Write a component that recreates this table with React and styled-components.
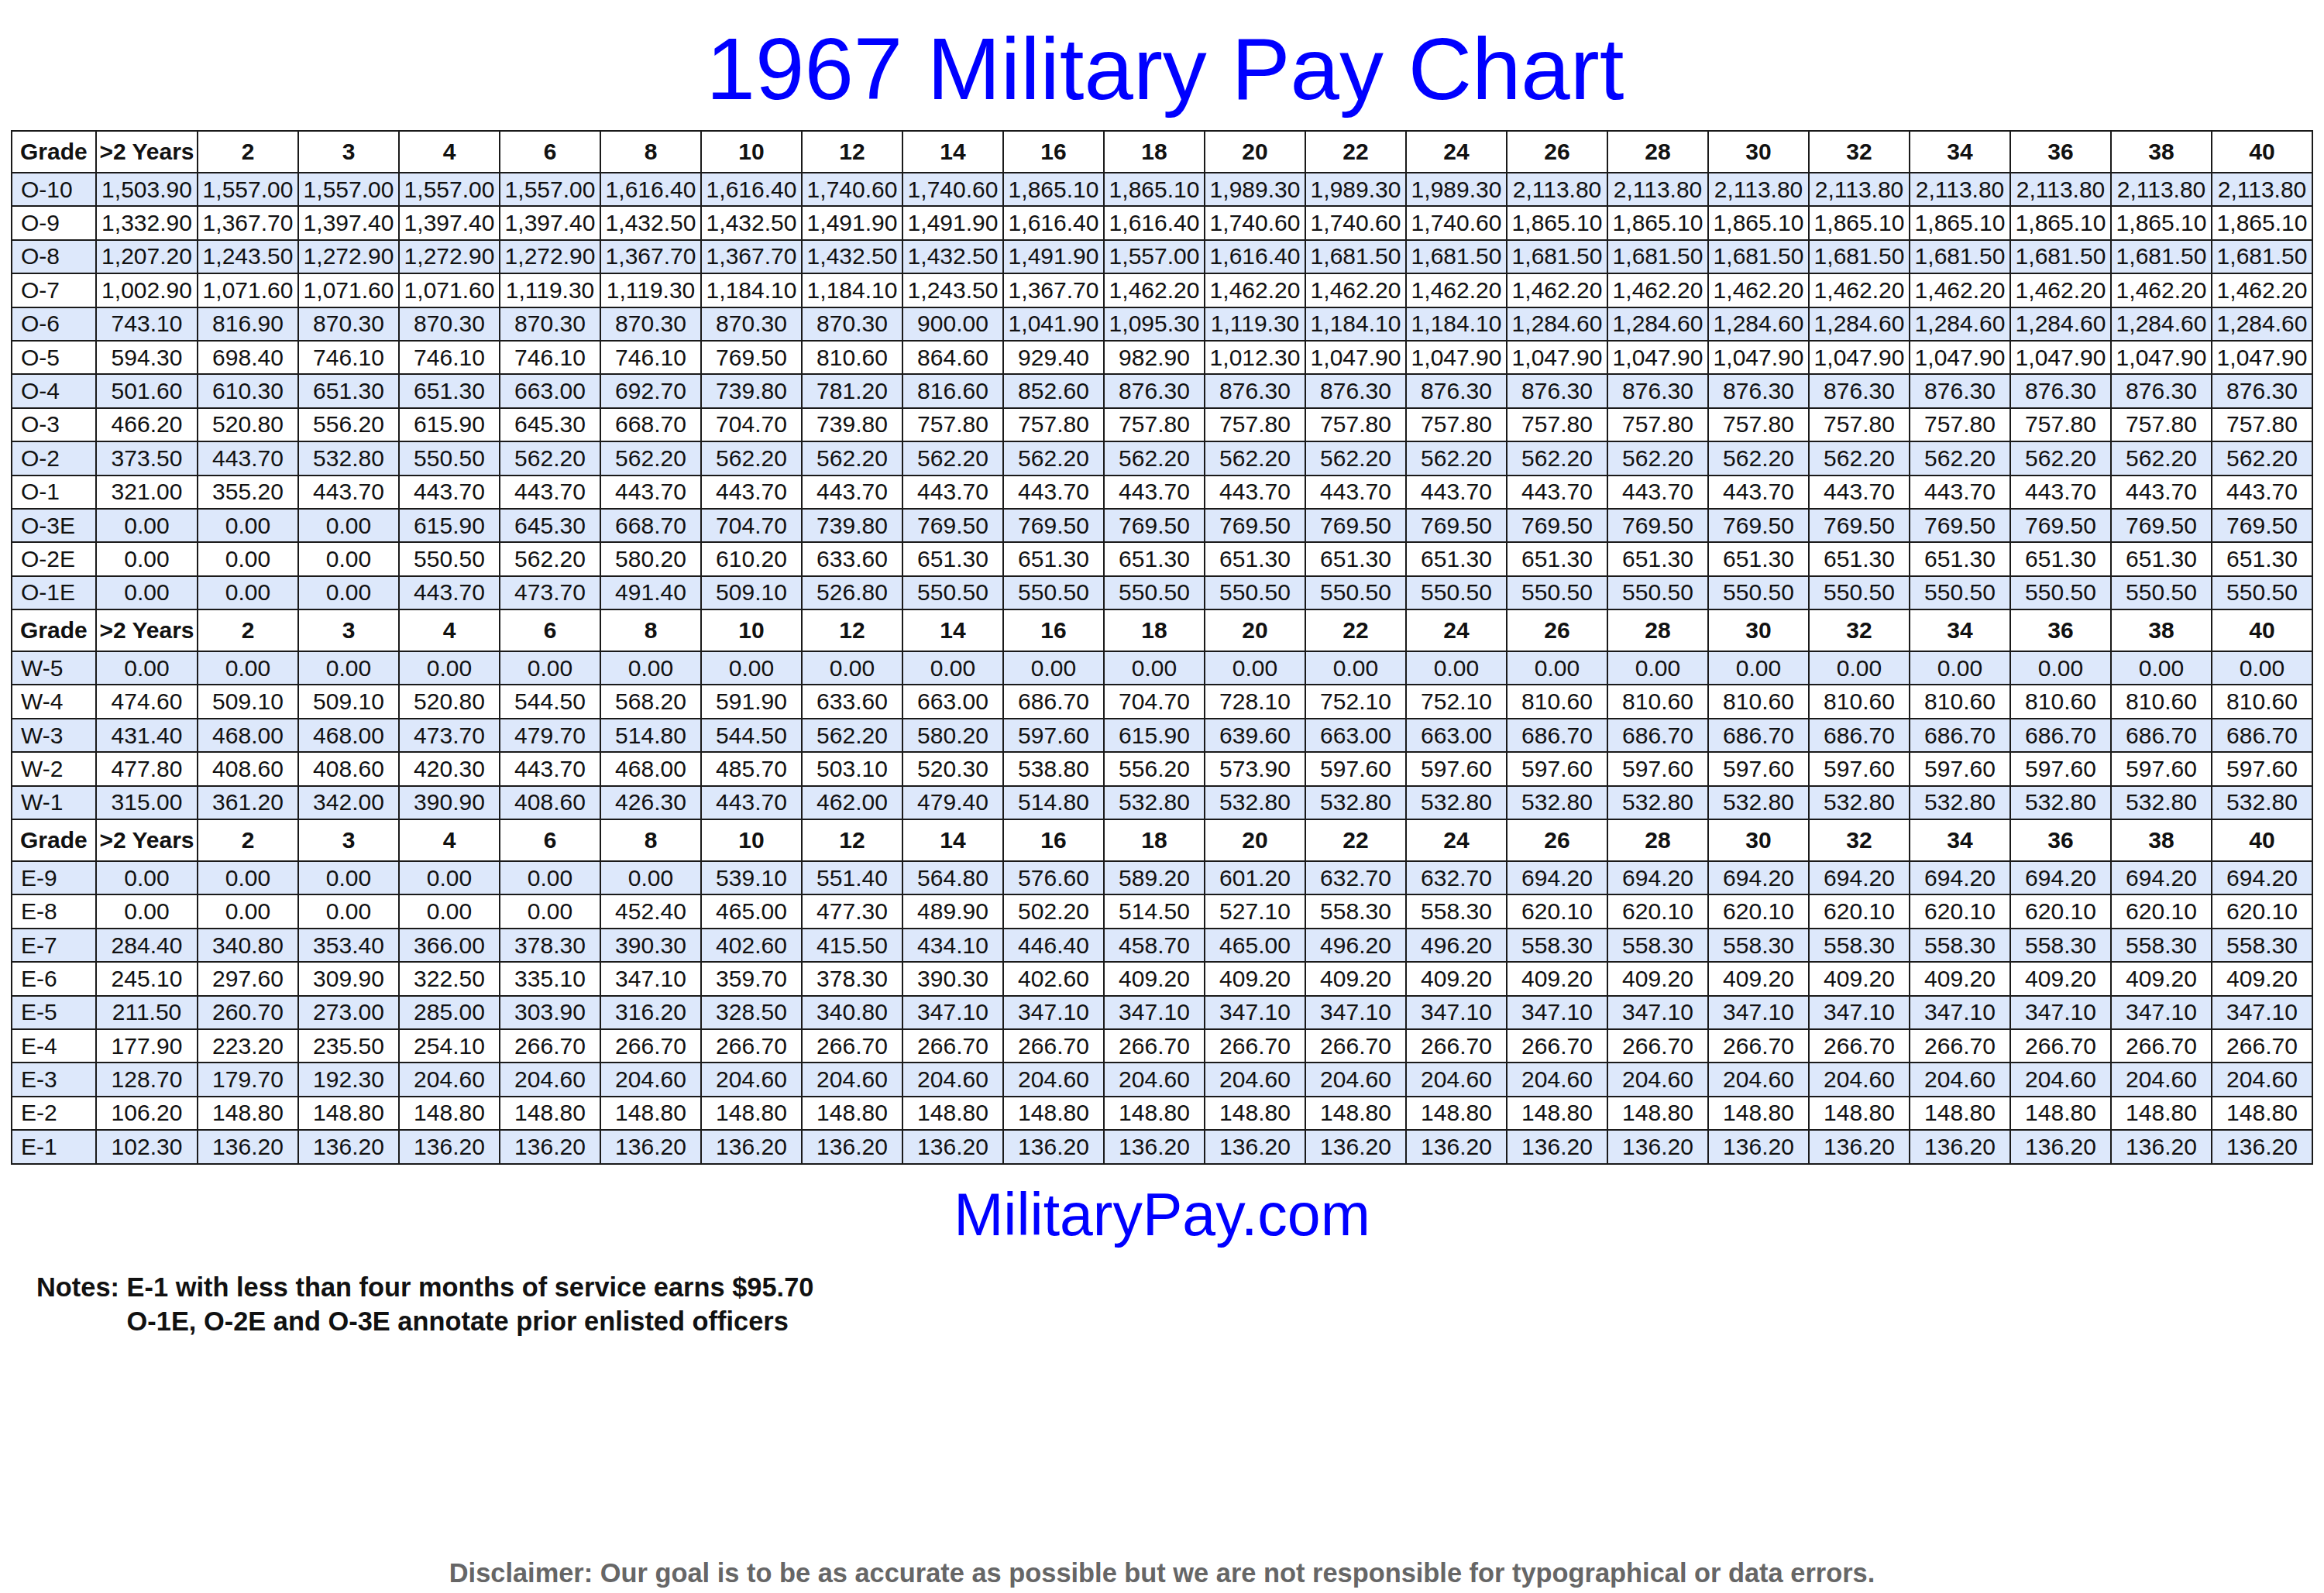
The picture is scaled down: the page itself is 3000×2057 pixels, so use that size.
import React from 'react';
import styled, { createGlobalStyle } from 'styled-components';

const GlobalStyle = createGlobalStyle`
  html, body { margin: 0; padding: 0; background: #ffffff; }
  body { font-family: "Liberation Sans", Arial, sans-serif; color: #111; }
`;

const Page = styled.div`
  width: 3000px;
  min-height: 2057px;
  box-sizing: border-box;
  padding: 23px 14px 0 14px;
  display: flex;
  flex-direction: column;
`;

const Title = styled.h1`
  margin: 0;
  font-family: "Liberation Sans", Arial, sans-serif;
  font-weight: 400;
  font-size: 114px;
  line-height: normal;
  color: #0000ff;
  text-align: center;
  padding-left: 8px;
`;

const Table = styled.table`
  margin-top: 14px;
  border-collapse: collapse;
  table-layout: fixed;
  width: 2971px;
  border: 2px solid #1a1a1a;
  font-family: "Liberation Sans", Arial, sans-serif;
  font-size: 30px;
  color: #111;
`;

const HeadRow = styled.tr`
  height: 54px;
  background: #ffffff;
`;

const DataRow = styled.tr`
  height: 43.4px;
  background: ${(p) => (p.$shade ? '#dde8fb' : '#ffffff')};
`;

const HeadCell = styled.td`
  border: 2px solid #1a1a1a;
  font-weight: 700;
  text-align: ${(p) => (p.$left ? 'left' : 'center')};
  padding: ${(p) => (p.$left ? '0 0 0 10px' : '0')};
  white-space: nowrap;
  overflow: hidden;
`;

const GradeCell = styled.td`
  border: 2px solid #1a1a1a;
  text-align: left;
  padding: 0 0 0 11px;
  white-space: nowrap;
`;

const PayCell = styled.td`
  border: 2px solid #1a1a1a;
  text-align: center;
  padding: 0;
  white-space: nowrap;
  overflow: hidden;
`;

const Site = styled.div`
  margin-top: 20px;
  font-size: 77px;
  line-height: normal;
  color: #0000ff;
  text-align: center;
`;

const Notes = styled.div`
  margin-top: 27px;
  margin-left: 33px;
  display: flex;
  font-size: 34.4px;
  font-weight: 700;
  line-height: 44px;
  color: #111;
`;

const NotesLabel = styled.span`
  white-space: pre;
`;

const NotesLines = styled.div`
  display: flex;
  flex-direction: column;
`;

const Disclaimer = styled.div`
  margin-top: 284px;
  font-size: 34.4px;
  font-weight: 700;
  line-height: normal;
  color: #666666;
  text-align: center;
`;

const COLS = ['>2 Years', '2', '3', '4', '6', '8', '10', '12', '14', '16', '18', '20', '22', '24', '26', '28', '30', '32', '34', '36', '38', '40'];

const fill = (vals) => {
  const out = [...vals];
  while (out.length < COLS.length) out.push(vals[vals.length - 1]);
  return out;
};

const z = (n) => Array(n).fill('0.00');

const sections = [
  [
    ['O-10', fill(['1,503.90', '1,557.00', '1,557.00', '1,557.00', '1,557.00', '1,616.40', '1,616.40', '1,740.60', '1,740.60', '1,865.10', '1,865.10', '1,989.30', '1,989.30', '1,989.30', '2,113.80'])],
    ['O-9', fill(['1,332.90', '1,367.70', '1,397.40', '1,397.40', '1,397.40', '1,432.50', '1,432.50', '1,491.90', '1,491.90', '1,616.40', '1,616.40', '1,740.60', '1,740.60', '1,740.60', '1,865.10'])],
    ['O-8', fill(['1,207.20', '1,243.50', '1,272.90', '1,272.90', '1,272.90', '1,367.70', '1,367.70', '1,432.50', '1,432.50', '1,491.90', '1,557.00', '1,616.40', '1,681.50'])],
    ['O-7', fill(['1,002.90', '1,071.60', '1,071.60', '1,071.60', '1,119.30', '1,119.30', '1,184.10', '1,184.10', '1,243.50', '1,367.70', '1,462.20'])],
    ['O-6', fill(['743.10', '816.90', '870.30', '870.30', '870.30', '870.30', '870.30', '870.30', '900.00', '1,041.90', '1,095.30', '1,119.30', '1,184.10', '1,184.10', '1,284.60'])],
    ['O-5', fill(['594.30', '698.40', '746.10', '746.10', '746.10', '746.10', '769.50', '810.60', '864.60', '929.40', '982.90', '1,012.30', '1,047.90'])],
    ['O-4', fill(['501.60', '610.30', '651.30', '651.30', '663.00', '692.70', '739.80', '781.20', '816.60', '852.60', '876.30'])],
    ['O-3', fill(['466.20', '520.80', '556.20', '615.90', '645.30', '668.70', '704.70', '739.80', '757.80'])],
    ['O-2', fill(['373.50', '443.70', '532.80', '550.50', '562.20'])],
    ['O-1', fill(['321.00', '355.20', '443.70'])],
    ['O-3E', fill([...z(3), '615.90', '645.30', '668.70', '704.70', '739.80', '769.50'])],
    ['O-2E', fill([...z(3), '550.50', '562.20', '580.20', '610.20', '633.60', '651.30'])],
    ['O-1E', fill([...z(3), '443.70', '473.70', '491.40', '509.10', '526.80', '550.50'])],
  ],
  [
    ['W-5', fill(z(1))],
    ['W-4', fill(['474.60', '509.10', '509.10', '520.80', '544.50', '568.20', '591.90', '633.60', '663.00', '686.70', '704.70', '728.10', '752.10', '752.10', '810.60'])],
    ['W-3', fill(['431.40', '468.00', '468.00', '473.70', '479.70', '514.80', '544.50', '562.20', '580.20', '597.60', '615.90', '639.60', '663.00', '663.00', '686.70'])],
    ['W-2', fill(['477.80', '408.60', '408.60', '420.30', '443.70', '468.00', '485.70', '503.10', '520.30', '538.80', '556.20', '573.90', '597.60'])],
    ['W-1', fill(['315.00', '361.20', '342.00', '390.90', '408.60', '426.30', '443.70', '462.00', '479.40', '514.80', '532.80'])],
  ],
  [
    ['E-9', fill([...z(6), '539.10', '551.40', '564.80', '576.60', '589.20', '601.20', '632.70', '632.70', '694.20'])],
    ['E-8', fill([...z(5), '452.40', '465.00', '477.30', '489.90', '502.20', '514.50', '527.10', '558.30', '558.30', '620.10'])],
    ['E-7', fill(['284.40', '340.80', '353.40', '366.00', '378.30', '390.30', '402.60', '415.50', '434.10', '446.40', '458.70', '465.00', '496.20', '496.20', '558.30'])],
    ['E-6', fill(['245.10', '297.60', '309.90', '322.50', '335.10', '347.10', '359.70', '378.30', '390.30', '402.60', '409.20'])],
    ['E-5', fill(['211.50', '260.70', '273.00', '285.00', '303.90', '316.20', '328.50', '340.80', '347.10'])],
    ['E-4', fill(['177.90', '223.20', '235.50', '254.10', '266.70'])],
    ['E-3', fill(['128.70', '179.70', '192.30', '204.60'])],
    ['E-2', fill(['106.20', '148.80'])],
    ['E-1', fill(['102.30', '136.20'])],
  ],
];

const Header = () => (
  <HeadRow>
    <HeadCell $left>Grade</HeadCell>
    {COLS.map((c) => (
      <HeadCell key={c}>{c}</HeadCell>
    ))}
  </HeadRow>
);

export default function App() {
  return (
    <>
      <GlobalStyle />
      <Page>
        <Title>1967 Military Pay Chart</Title>
        <Table>
          <colgroup>
            <col style={{ width: 109 }} />
            <col style={{ width: 131 }} />
            {COLS.slice(1).map((c) => (
              <col key={c} style={{ width: 130 }} />
            ))}
          </colgroup>
          <tbody>
            {sections.map((rows, si) => (
              <React.Fragment key={si}>
                <Header />
                {rows.map(([grade, vals], ri) => (
                  <DataRow key={grade} $shade={ri % 2 === 0}>
                    <GradeCell>{grade}</GradeCell>
                    {vals.map((v, vi) => (
                      <PayCell key={vi}>{v}</PayCell>
                    ))}
                  </DataRow>
                ))}
              </React.Fragment>
            ))}
          </tbody>
        </Table>
        <Site>MilitaryPay.com</Site>
        <Notes>
          <NotesLabel>Notes: </NotesLabel>
          <NotesLines>
            <span>E-1 with less than four months of service earns $95.70</span>
            <span>O-1E, O-2E and O-3E annotate prior enlisted officers</span>
          </NotesLines>
        </Notes>
        <Disclaimer>Disclaimer: Our goal is to be as accurate as possible but we are not responsible for typographical or data errors.</Disclaimer>
      </Page>
    </>
  );
}
